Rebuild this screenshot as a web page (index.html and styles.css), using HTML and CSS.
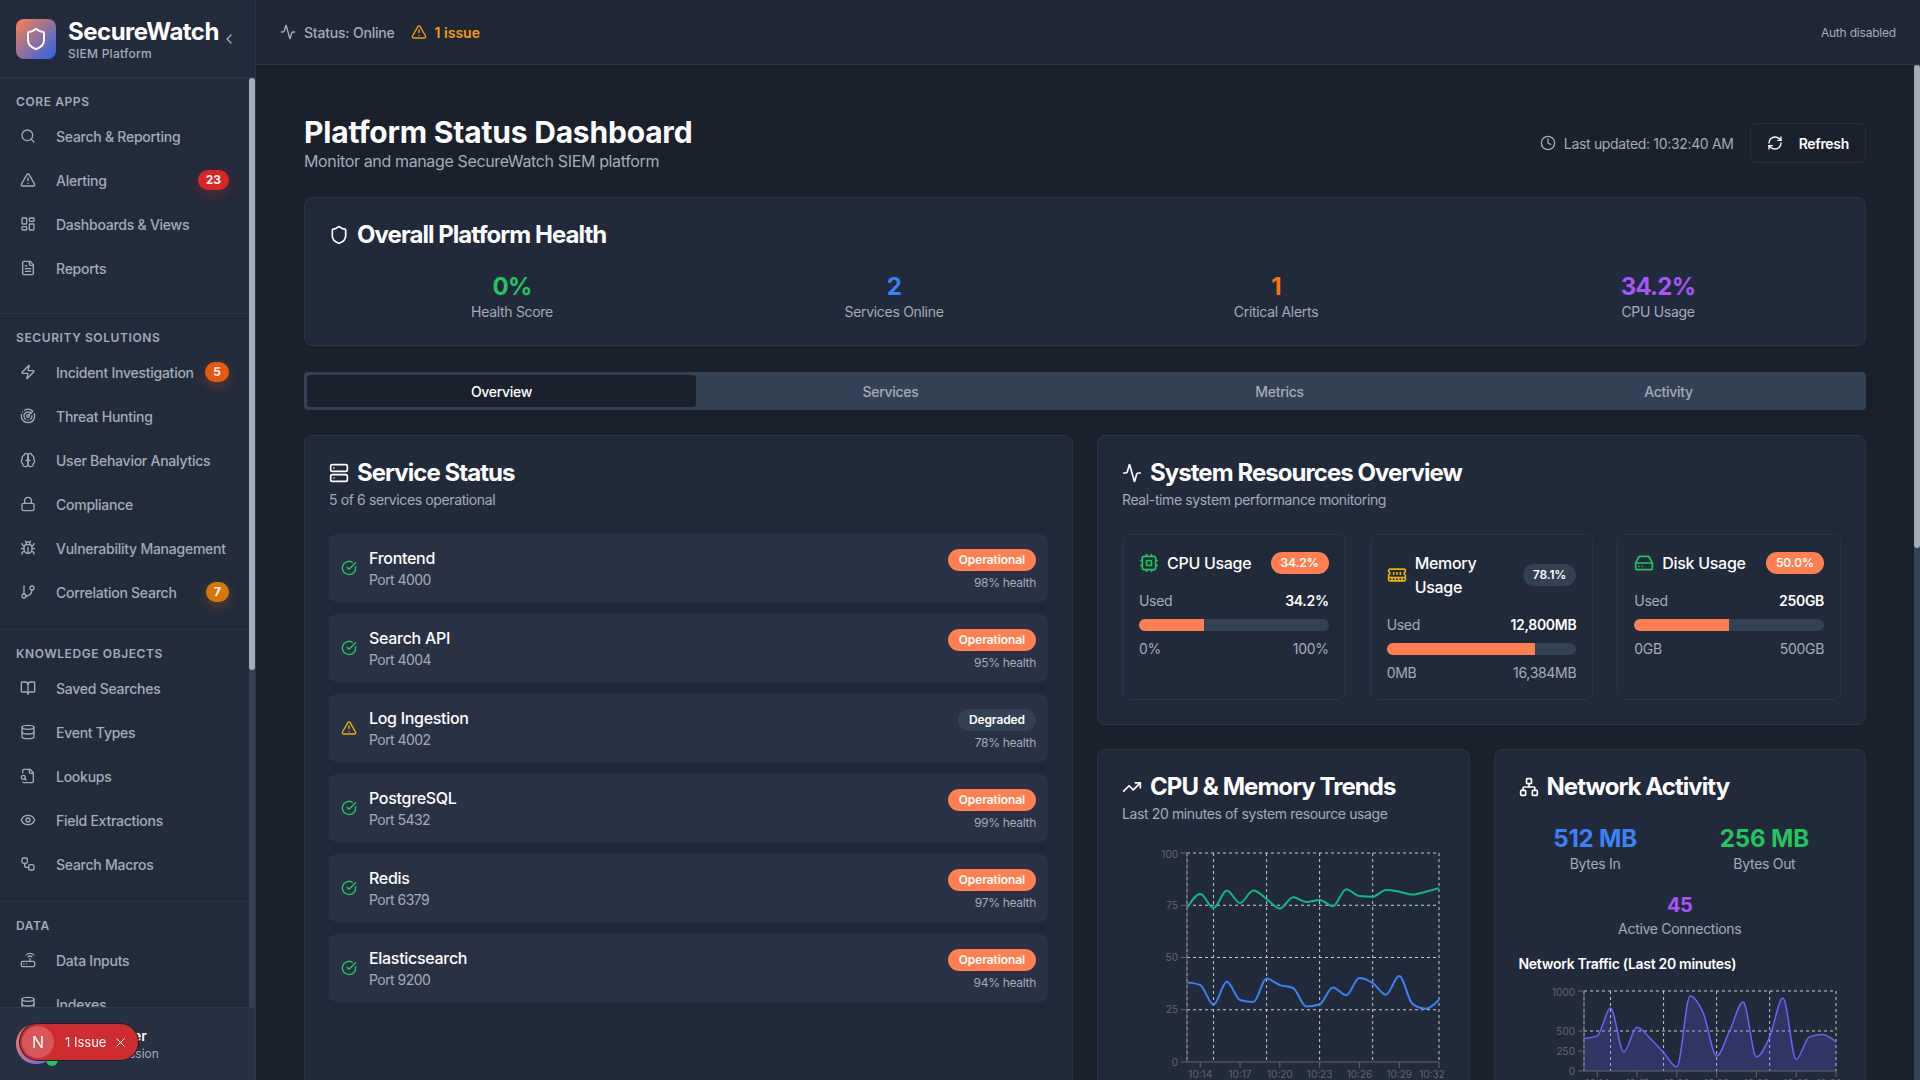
FILE: index.html
```html
<!DOCTYPE html>
<html lang="en">
<head>
    <meta charset="UTF-8">
    <meta name="viewport" content="width=device-width, initial-scale=1.0">
    <title>SecureWatch - Platform Status</title>
    <link rel="stylesheet" href="styles.css">
</head>
<body>
    <!-- Icon sprite -->
    <svg class="sprite" xmlns="http://www.w3.org/2000/svg">
        <symbol id="i-search" viewBox="0 0 24 24"><circle cx="11" cy="11" r="8"/><path d="m21 21-4.3-4.3"/></symbol>
        <symbol id="i-alert" viewBox="0 0 24 24"><path d="m21.73 18-8-14a2 2 0 0 0-3.48 0l-8 14A2 2 0 0 0 4 21h16a2 2 0 0 0 1.73-3"/><path d="M12 9v4"/><path d="M12 17h.01"/></symbol>
        <symbol id="i-dashboard" viewBox="0 0 24 24"><rect x="3" y="3" width="7" height="9" rx="1"/><rect x="14" y="3" width="7" height="5" rx="1"/><rect x="14" y="12" width="7" height="9" rx="1"/><rect x="3" y="16" width="7" height="5" rx="1"/></symbol>
        <symbol id="i-file" viewBox="0 0 24 24"><path d="M15 2H6a2 2 0 0 0-2 2v16a2 2 0 0 0 2 2h12a2 2 0 0 0 2-2V7Z"/><path d="M14 2v4a2 2 0 0 0 2 2h4"/><path d="M10 9H8"/><path d="M16 13H8"/><path d="M16 17H8"/></symbol>
        <symbol id="i-zap" viewBox="0 0 24 24"><path d="M4 14a1 1 0 0 1-.78-1.63l9.9-10.2a.5.5 0 0 1 .86.46l-1.92 6.02A1 1 0 0 0 13 10h7a1 1 0 0 1 .78 1.63l-9.9 10.2a.5.5 0 0 1-.86-.46l1.92-6.02A1 1 0 0 0 11 14z"/></symbol>
        <symbol id="i-radar" viewBox="0 0 24 24"><path d="M19.07 4.93A10 10 0 0 0 6.99 3.34"/><path d="M4 6h.01"/><path d="M2.29 9.62A10 10 0 1 0 21.31 8.35"/><path d="M16.24 7.76A6 6 0 1 0 8.23 16.67"/><path d="M12 18h.01"/><path d="M17.99 11.66A6 6 0 0 1 15.77 16.67"/><circle cx="12" cy="12" r="2"/><path d="m13.41 10.59 5.66-5.66"/></symbol>
        <symbol id="i-brain" viewBox="0 0 24 24"><path d="M12 5a3 3 0 1 0-5.997.125 4 4 0 0 0-2.526 5.77 4 4 0 0 0 .556 6.588A4 4 0 1 0 12 18Z"/><path d="M12 5a3 3 0 1 1 5.997.125 4 4 0 0 1 2.526 5.77 4 4 0 0 1-.556 6.588A4 4 0 1 1 12 18Z"/><path d="M15 13a4.5 4.5 0 0 1-3-4 4.5 4.5 0 0 1-3 4"/></symbol>
        <symbol id="i-lock" viewBox="0 0 24 24"><rect x="3" y="11" width="18" height="11" rx="2"/><path d="M7 11V7a5 5 0 0 1 10 0v4"/></symbol>
        <symbol id="i-bug" viewBox="0 0 24 24"><path d="m8 2 1.88 1.88"/><path d="M14.12 3.88 16 2"/><path d="M9 7.13v-1a3.003 3.003 0 1 1 6 0v1"/><path d="M12 20c-3.3 0-6-2.7-6-6v-3a4 4 0 0 1 4-4h4a4 4 0 0 1 4 4v3c0 3.3-2.7 6-6 6"/><path d="M12 20v-9"/><path d="M6.53 9C4.6 8.8 3 7.1 3 5"/><path d="M6 13H2"/><path d="M3 21c0-2.1 1.7-3.9 3.8-4"/><path d="M20.97 5c0 2.1-1.6 3.8-3.5 4"/><path d="M22 13h-4"/><path d="M17.2 17c2.1.1 3.8 1.9 3.8 4"/></symbol>
        <symbol id="i-branch" viewBox="0 0 24 24"><path d="M6 3v12"/><circle cx="18" cy="6" r="3"/><circle cx="6" cy="18" r="3"/><path d="M18 9a9 9 0 0 1-9 9"/></symbol>
        <symbol id="i-book" viewBox="0 0 24 24"><path d="M12 7v14"/><path d="M3 18a1 1 0 0 1-1-1V4a1 1 0 0 1 1-1h5a4 4 0 0 1 4 4 4 4 0 0 1 4-4h5a1 1 0 0 1 1 1v13a1 1 0 0 1-1 1h-6a3 3 0 0 0-3 3 3 3 0 0 0-3-3z"/></symbol>
        <symbol id="i-database" viewBox="0 0 24 24"><ellipse cx="12" cy="5" rx="9" ry="3"/><path d="M3 5V19A9 3 0 0 0 21 19V5"/><path d="M3 12A9 3 0 0 0 21 12"/></symbol>
        <symbol id="i-file-search" viewBox="0 0 24 24"><path d="M14 2v4a2 2 0 0 0 2 2h4"/><path d="M4.268 21a2 2 0 0 0 1.727 1H18a2 2 0 0 0 2-2V7l-5-5H6a2 2 0 0 0-2 2v3"/><path d="m9 18-1.5-1.5"/><circle cx="5" cy="14" r="3"/></symbol>
        <symbol id="i-eye" viewBox="0 0 24 24"><path d="M2.062 12.348a1 1 0 0 1 0-.696 10.75 10.75 0 0 1 19.876 0 1 1 0 0 1 0 .696 10.75 10.75 0 0 1-19.876 0"/><circle cx="12" cy="12" r="3"/></symbol>
        <symbol id="i-workflow" viewBox="0 0 24 24"><rect x="3" y="3" width="8" height="8" rx="2"/><path d="M7 11v4a2 2 0 0 0 2 2h4"/><rect x="13" y="13" width="8" height="8" rx="2"/></symbol>
        <symbol id="i-router" viewBox="0 0 24 24"><rect x="2" y="14" width="20" height="8" rx="2"/><path d="M6.01 18H6"/><path d="M10.01 18H10"/><path d="M15 10v4"/><path d="M17.84 7.17a4 4 0 0 0-5.66 0"/><path d="M20.66 4.34a8 8 0 0 0-11.31 0"/></symbol>
        <symbol id="i-activity" viewBox="0 0 24 24"><path d="M22 12h-2.48a2 2 0 0 0-1.93 1.46l-2.35 8.36a.25.25 0 0 1-.48 0L9.24 2.18a.25.25 0 0 0-.48 0l-2.35 8.36A2 2 0 0 1 4.49 12H2"/></symbol>
        <symbol id="i-shield" viewBox="0 0 24 24"><path d="M20 13c0 5-3.5 7.5-7.66 8.95a1 1 0 0 1-.67-.01C7.5 20.5 4 18 4 13V6a1 1 0 0 1 1-1c2 0 4.5-1.2 6.24-2.72a1.17 1.17 0 0 1 1.52 0C14.51 3.81 17 5 19 5a1 1 0 0 1 1 1z"/></symbol>
        <symbol id="i-clock" viewBox="0 0 24 24"><circle cx="12" cy="12" r="10"/><path d="M12 6v6l4 2"/></symbol>
        <symbol id="i-refresh" viewBox="0 0 24 24"><path d="M3 12a9 9 0 0 1 9-9 9.75 9.75 0 0 1 6.74 2.74L21 8"/><path d="M21 3v5h-5"/><path d="M21 12a9 9 0 0 1-9 9 9.75 9.75 0 0 1-6.74-2.74L3 16"/><path d="M8 16H3v5"/></symbol>
        <symbol id="i-server" viewBox="0 0 24 24"><rect x="2" y="2" width="20" height="8" rx="2"/><rect x="2" y="14" width="20" height="8" rx="2"/><path d="M6 6h.01"/><path d="M6 18h.01"/></symbol>
        <symbol id="i-cpu" viewBox="0 0 24 24"><rect x="4" y="4" width="16" height="16" rx="2"/><rect x="9" y="9" width="6" height="6" rx="1"/><path d="M15 2v2"/><path d="M15 20v2"/><path d="M2 15h2"/><path d="M2 9h2"/><path d="M20 15h2"/><path d="M20 9h2"/><path d="M9 2v2"/><path d="M9 20v2"/></symbol>
        <symbol id="i-memory" viewBox="0 0 24 24"><path d="M6 19v-3"/><path d="M10 19v-3"/><path d="M14 19v-3"/><path d="M18 19v-3"/><path d="M8 11V9"/><path d="M16 11V9"/><path d="M12 11V9"/><path d="M2 15h20"/><path d="M2 7a2 2 0 0 1 2-2h16a2 2 0 0 1 2 2v1.1a2 2 0 0 0 0 3.837V17a2 2 0 0 1-2 2H4a2 2 0 0 1-2-2v-5.1a2 2 0 0 0 0-3.837Z"/></symbol>
        <symbol id="i-disk" viewBox="0 0 24 24"><path d="M22 12H2"/><path d="M5.45 5.11 2 12v6a2 2 0 0 0 2 2h16a2 2 0 0 0 2-2v-6l-3.45-6.89A2 2 0 0 0 16.76 4H7.24a2 2 0 0 0-1.79 1.11z"/><path d="M6 16h.01"/><path d="M10 16h.01"/></symbol>
        <symbol id="i-trend" viewBox="0 0 24 24"><path d="M16 7h6v6"/><path d="m22 7-8.5 8.5-5-5L2 17"/></symbol>
        <symbol id="i-network" viewBox="0 0 24 24"><rect x="16" y="16" width="6" height="6" rx="1"/><rect x="2" y="16" width="6" height="6" rx="1"/><rect x="9" y="2" width="6" height="6" rx="1"/><path d="M5 16v-3a1 1 0 0 1 1-1h12a1 1 0 0 1 1 1v3"/><path d="M12 12V8"/></symbol>
        <symbol id="i-check" viewBox="0 0 24 24"><path d="M21.801 10A10 10 0 1 1 17 3.335"/><path d="m9 11 3 3L22 4"/></symbol>
        <symbol id="i-chevron" viewBox="0 0 24 24"><path d="m15 18-6-6 6-6"/></symbol>
        <symbol id="i-x" viewBox="0 0 24 24"><path d="M18 6 6 18"/><path d="m6 6 12 12"/></symbol>
    </svg>

    <div class="app">
        <aside class="sidebar">
            <div class="brand">
                <div class="brand-logo"><svg class="icon icon-logo"><use href="#i-shield"/></svg></div>
                <div class="brand-text">
                    <div class="brand-name">SecureWatch</div>
                    <div class="brand-sub">SIEM Platform</div>
                </div>
                <svg class="icon brand-toggle"><use href="#i-chevron"/></svg>
            </div>

            <nav class="nav">
                <section class="nav-section nav-section-first">
                    <h3 class="nav-title">Core Apps</h3>
                    <a class="nav-item"><svg class="icon"><use href="#i-search"/></svg><span>Search &amp; Reporting</span></a>
                    <a class="nav-item"><svg class="icon"><use href="#i-alert"/></svg><span>Alerting</span><b class="count count-red">23</b></a>
                    <a class="nav-item"><svg class="icon"><use href="#i-dashboard"/></svg><span>Dashboards &amp; Views</span></a>
                    <a class="nav-item"><svg class="icon"><use href="#i-file"/></svg><span>Reports</span></a>
                </section>
                <section class="nav-section">
                    <h3 class="nav-title">Security Solutions</h3>
                    <a class="nav-item"><svg class="icon"><use href="#i-zap"/></svg><span>Incident Investigation</span><b class="count count-orange">5</b></a>
                    <a class="nav-item"><svg class="icon"><use href="#i-radar"/></svg><span>Threat Hunting</span></a>
                    <a class="nav-item"><svg class="icon"><use href="#i-brain"/></svg><span>User Behavior Analytics</span></a>
                    <a class="nav-item"><svg class="icon"><use href="#i-lock"/></svg><span>Compliance</span></a>
                    <a class="nav-item"><svg class="icon"><use href="#i-bug"/></svg><span>Vulnerability Management</span></a>
                    <a class="nav-item"><svg class="icon"><use href="#i-branch"/></svg><span>Correlation Search</span><b class="count count-amber">7</b></a>
                </section>
                <section class="nav-section">
                    <h3 class="nav-title">Knowledge Objects</h3>
                    <a class="nav-item"><svg class="icon"><use href="#i-book"/></svg><span>Saved Searches</span></a>
                    <a class="nav-item"><svg class="icon"><use href="#i-database"/></svg><span>Event Types</span></a>
                    <a class="nav-item"><svg class="icon"><use href="#i-file-search"/></svg><span>Lookups</span></a>
                    <a class="nav-item"><svg class="icon"><use href="#i-eye"/></svg><span>Field Extractions</span></a>
                    <a class="nav-item"><svg class="icon"><use href="#i-workflow"/></svg><span>Search Macros</span></a>
                </section>
                <section class="nav-section">
                    <h3 class="nav-title">Data</h3>
                    <a class="nav-item"><svg class="icon"><use href="#i-router"/></svg><span>Data Inputs</span></a>
                    <a class="nav-item"><svg class="icon"><use href="#i-database"/></svg><span>Indexes</span></a>
                </section>
                <div class="scrollbar"><div class="scrollbar-thumb thumb-nav"></div></div>
            </nav>

            <div class="user">
                <div class="user-avatar"><span class="user-dot"></span></div>
                <div>
                    <div class="user-name">Admin User</div>
                    <div class="user-sub">Current Session</div>
                </div>
            </div>
        </aside>

        <div class="content">
            <header class="topbar">
                <svg class="icon"><use href="#i-activity"/></svg>
                <span class="topbar-status">Status: Online</span>
                <svg class="icon topbar-warn"><use href="#i-alert"/></svg>
                <span class="topbar-issue">1 issue</span>
                <span class="topbar-auth">Auth disabled</span>
            </header>

            <main class="main">
                <div class="main-inner">
                    <div class="page-head">
                        <div>
                            <h1>Platform Status Dashboard</h1>
                            <p class="page-sub">Monitor and manage SecureWatch SIEM platform</p>
                        </div>
                        <div class="page-actions">
                            <svg class="icon"><use href="#i-clock"/></svg>
                            <span class="updated">Last updated: 10:32:40 AM</span>
                            <button class="refresh-btn"><svg class="icon"><use href="#i-refresh"/></svg>Refresh</button>
                        </div>
                    </div>

                    <section class="card health-card">
                        <h2 class="card-title"><svg class="icon icon-title"><use href="#i-shield"/></svg>Overall Platform Health</h2>
                        <div class="health-grid">
                            <div><div class="stat-value text-green">0%</div><div class="stat-label">Health Score</div></div>
                            <div><div class="stat-value text-blue">2</div><div class="stat-label">Services Online</div></div>
                            <div><div class="stat-value text-orange">1</div><div class="stat-label">Critical Alerts</div></div>
                            <div><div class="stat-value text-purple">34.2%</div><div class="stat-label">CPU Usage</div></div>
                        </div>
                    </section>

                    <div class="tabs">
                        <div class="tab tab-active">Overview</div>
                        <div class="tab">Services</div>
                        <div class="tab">Metrics</div>
                        <div class="tab">Activity</div>
                    </div>

                    <div class="overview">
                        <section class="card service-card">
                            <h2 class="card-title"><svg class="icon icon-title"><use href="#i-server"/></svg>Service Status</h2>
                            <p class="card-sub">5 of 6 services operational</p>
                            <div class="service-list">
                                <div class="service">
                                    <svg class="icon text-green"><use href="#i-check"/></svg>
                                    <div class="service-info"><div class="service-name">Frontend</div><div class="service-port">Port 4000</div></div>
                                    <div class="service-state"><span class="pill pill-orange">Operational</span><span class="service-health">98% health</span></div>
                                </div>
                                <div class="service">
                                    <svg class="icon text-green"><use href="#i-check"/></svg>
                                    <div class="service-info"><div class="service-name">Search API</div><div class="service-port">Port 4004</div></div>
                                    <div class="service-state"><span class="pill pill-orange">Operational</span><span class="service-health">95% health</span></div>
                                </div>
                                <div class="service">
                                    <svg class="icon text-amber"><use href="#i-alert"/></svg>
                                    <div class="service-info"><div class="service-name">Log Ingestion</div><div class="service-port">Port 4002</div></div>
                                    <div class="service-state"><span class="pill pill-slate">Degraded</span><span class="service-health">78% health</span></div>
                                </div>
                                <div class="service">
                                    <svg class="icon text-green"><use href="#i-check"/></svg>
                                    <div class="service-info"><div class="service-name">PostgreSQL</div><div class="service-port">Port 5432</div></div>
                                    <div class="service-state"><span class="pill pill-orange">Operational</span><span class="service-health">99% health</span></div>
                                </div>
                                <div class="service">
                                    <svg class="icon text-green"><use href="#i-check"/></svg>
                                    <div class="service-info"><div class="service-name">Redis</div><div class="service-port">Port 6379</div></div>
                                    <div class="service-state"><span class="pill pill-orange">Operational</span><span class="service-health">97% health</span></div>
                                </div>
                                <div class="service">
                                    <svg class="icon text-green"><use href="#i-check"/></svg>
                                    <div class="service-info"><div class="service-name">Elasticsearch</div><div class="service-port">Port 9200</div></div>
                                    <div class="service-state"><span class="pill pill-orange">Operational</span><span class="service-health">94% health</span></div>
                                </div>
                            </div>
                        </section>

                        <div class="overview-right">
                            <section class="card">
                                <h2 class="card-title"><svg class="icon icon-title"><use href="#i-activity"/></svg>System Resources Overview</h2>
                                <p class="card-sub">Real-time system performance monitoring</p>
                                <div class="resource-grid">
                                    <div class="resource">
                                        <div class="resource-head">
                                            <svg class="icon icon-res text-green"><use href="#i-cpu"/></svg>
                                            <span class="resource-name">CPU Usage</span>
                                            <span class="pill pill-orange">34.2%</span>
                                        </div>
                                        <div class="resource-row"><span>Used</span><b>34.2%</b></div>
                                        <div class="bar"><div class="bar-fill" style="width: 34.2%"></div></div>
                                        <div class="resource-row"><span>0%</span><span>100%</span></div>
                                    </div>
                                    <div class="resource">
                                        <div class="resource-head">
                                            <svg class="icon icon-res text-amber"><use href="#i-memory"/></svg>
                                            <span class="resource-name">Memory Usage</span>
                                            <span class="pill pill-slate">78.1%</span>
                                        </div>
                                        <div class="resource-row"><span>Used</span><b>12,800MB</b></div>
                                        <div class="bar"><div class="bar-fill" style="width: 78.1%"></div></div>
                                        <div class="resource-row"><span>0MB</span><span>16,384MB</span></div>
                                    </div>
                                    <div class="resource">
                                        <div class="resource-head">
                                            <svg class="icon icon-res text-green"><use href="#i-disk"/></svg>
                                            <span class="resource-name">Disk Usage</span>
                                            <span class="pill pill-orange">50.0%</span>
                                        </div>
                                        <div class="resource-row"><span>Used</span><b>250GB</b></div>
                                        <div class="bar"><div class="bar-fill" style="width: 50%"></div></div>
                                        <div class="resource-row"><span>0GB</span><span>500GB</span></div>
                                    </div>
                                </div>
                            </section>

                            <div class="chart-cards">
                                <section class="card">
                                    <h2 class="card-title"><svg class="icon icon-title"><use href="#i-trend"/></svg>CPU &amp; Memory Trends</h2>
                                    <p class="card-sub">Last 20 minutes of system resource usage</p>
                                    <svg class="chart chart-trends" id="trendsChart" width="322" height="245"></svg>
                                </section>
                                <section class="card">
                                    <h2 class="card-title"><svg class="icon icon-title"><use href="#i-network"/></svg>Network Activity</h2>
                                    <div class="net-stats">
                                        <div><div class="stat-value text-blue">512 MB</div><div class="stat-label">Bytes In</div></div>
                                        <div><div class="stat-value text-green">256 MB</div><div class="stat-label">Bytes Out</div></div>
                                    </div>
                                    <div class="net-conn">
                                        <div class="net-conn-value text-purple">45</div>
                                        <div class="stat-label">Active Connections</div>
                                    </div>
                                    <h4 class="net-title">Network Traffic (Last 20 minutes)</h4>
                                    <svg class="chart chart-net" id="netChart" width="322" height="110"></svg>
                                </section>
                            </div>
                        </div>
                    </div>
                </div>
                <div class="scrollbar"><div class="scrollbar-thumb thumb-main"></div></div>
            </main>
        </div>
    </div>

    <div class="issue-toast">
        <span class="issue-logo">N</span>
        <span class="issue-text">1 Issue</span>
        <svg class="icon issue-close"><use href="#i-x"/></svg>
    </div>

    <script src="charts.js"></script>
</body>
</html>
```

FILE: styles.css
```css
* {
    margin: 0;
    padding: 0;
    box-sizing: border-box;
}

body {
    background: #1a202c;
    color: #fff;
    font-family: Inter, 'Liberation Sans', sans-serif;
    letter-spacing: -0.3px;
    height: 100vh;
    overflow: hidden;
}

.sprite {
    display: none;
}

.icon {
    width: 16px;
    height: 16px;
    flex-shrink: 0;
    fill: none;
    stroke: currentColor;
    stroke-width: 2;
    stroke-linecap: round;
    stroke-linejoin: round;
}

.text-green { color: #22c55e; }
.text-blue { color: #3b82f6; }
.text-orange { color: #f97316; }
.text-purple { color: #a855f7; }
.text-amber { color: #eab308; }

.app {
    display: flex;
    height: 100vh;
}

/* Sidebar */
.sidebar {
    width: 256px;
    flex-shrink: 0;
    display: flex;
    flex-direction: column;
    background: #222b3c;
    border-right: 1px solid #2c3648;
}

.brand {
    height: 78px;
    flex-shrink: 0;
    display: flex;
    align-items: center;
    padding: 0 18px 0 16px;
    border-bottom: 1px solid #2c3648;
}

.brand-logo {
    width: 40px;
    height: 40px;
    flex-shrink: 0;
    margin-right: 12px;
    border-radius: 8px;
    background: linear-gradient(135deg, #ff7f50, #2563eb);
    display: flex;
    align-items: center;
    justify-content: center;
}

.icon-logo {
    width: 24px;
    height: 24px;
    color: #fff;
}

.brand-text {
    padding-top: 2px;
}

.brand-name {
    font-size: 24px;
    line-height: 28px;
    font-weight: 700;
    letter-spacing: -0.5px;
}

.brand-sub {
    font-size: 12px;
    line-height: 16px;
    font-weight: 500;
    letter-spacing: 0.25px;
    color: #a3acb9;
}

.brand-toggle {
    margin-left: auto;
    color: #a3acb9;
}

.nav {
    position: relative;
    flex: 1;
    min-height: 0;
    padding-right: 6px;
    overflow: hidden;
}

/* Scrollbars are drawn so they show in every browser setup */
.scrollbar {
    position: absolute;
    top: 0;
    right: 0;
    bottom: 0;
    width: 6px;
    background: #334155;
}

.scrollbar-thumb {
    background: #a3adba;
    border-radius: 3px;
}

.thumb-nav { height: 592px; }
.thumb-main { height: 483px; }

.nav-section {
    padding: 16px 8px 15px;
    border-bottom: 1px solid #2a3446;
}

.nav-section-first {
    padding-bottom: 23px;
}

.nav-section:last-of-type {
    border-bottom: none;
}

.nav-title {
    padding: 0 8px;
    margin-bottom: 5px;
    font-size: 12px;
    line-height: 15px;
    font-weight: 600;
    letter-spacing: 0.6px;
    text-transform: uppercase;
    color: #a3acb9;
}

.nav-item {
    height: 44px;
    display: flex;
    align-items: center;
    padding: 0 12px;
    font-size: 14px;
    font-weight: 500;
    letter-spacing: -0.25px;
    white-space: nowrap;
    color: #a3acb9;
}

.nav-item .icon {
    margin-right: 20px;
}

.count {
    margin-left: auto;
    min-width: 22px;
    height: 20px;
    padding: 0 8px;
    border-radius: 10px;
    font-size: 12px;
    line-height: 20px;
    font-weight: 700;
    letter-spacing: 0;
    text-align: center;
    color: #fff;
}

.count-red {
    background: #dc2626;
    box-shadow: 0 4px 12px rgba(220, 38, 38, 0.3);
}

.count-orange {
    background: #ea580c;
    box-shadow: 0 4px 12px rgba(234, 88, 12, 0.3);
}

.count-amber {
    background: #d97706;
    box-shadow: 0 4px 12px rgba(217, 119, 6, 0.3);
}

.user {
    height: 73px;
    flex-shrink: 0;
    display: flex;
    align-items: center;
    gap: 12px;
    padding: 0 16px;
    background: #283143;
    border-top: 1px solid #2f394c;
}

.user-avatar {
    position: relative;
    width: 40px;
    height: 40px;
    flex-shrink: 0;
    border-radius: 50%;
    background: linear-gradient(135deg, #ff7f50, #6366f1);
}

.user-dot {
    position: absolute;
    right: -2px;
    bottom: -2px;
    width: 12px;
    height: 12px;
    border-radius: 50%;
    background: #22c55e;
}

.user-name {
    font-size: 14px;
    line-height: 20px;
    font-weight: 600;
    letter-spacing: 0;
}

.user-sub {
    font-size: 12px;
    line-height: 16px;
    letter-spacing: 0;
    color: #a3acb9;
}

/* Next dev badge */
.issue-toast {
    position: fixed;
    left: 20px;
    bottom: 20px;
    height: 36px;
    width: 118px;
    display: flex;
    align-items: center;
    padding-left: 2px;
    border-radius: 18px;
    background: #cf2c30;
    box-shadow: 0 0 0 1px #1a202c;
    font-size: 13px;
    font-weight: 400;
    letter-spacing: 0;
}

.issue-logo {
    width: 32px;
    height: 32px;
    flex-shrink: 0;
    border-radius: 50%;
    background: rgba(255, 255, 255, 0.2);
    display: flex;
    align-items: center;
    justify-content: center;
    font-size: 16px;
}

.issue-text {
    margin-left: 11px;
}

.issue-close {
    width: 15px;
    height: 15px;
    margin-left: 7px;
    stroke-width: 1.6;
}

/* Top bar */
.content {
    flex: 1;
    min-width: 0;
    display: flex;
    flex-direction: column;
}

.topbar {
    height: 65px;
    flex-shrink: 0;
    display: flex;
    align-items: center;
    padding: 0 24px;
    background: #1f2737;
    border-bottom: 1px solid #2c3648;
    font-size: 14px;
    color: #a3acb9;
}

.topbar-status {
    margin-left: 8px;
    font-weight: 500;
    letter-spacing: -0.2px;
}

.topbar-warn {
    margin-left: 16px;
    color: #f59e0b;
}

.topbar-issue {
    margin-left: 8px;
    font-weight: 600;
    letter-spacing: 0;
    color: #f59e0b;
}

.topbar-auth {
    margin-left: auto;
    font-size: 12px;
    letter-spacing: -0.2px;
}

/* Main */
.main {
    position: relative;
    flex: 1;
    min-height: 0;
    padding-right: 6px;
    overflow: hidden;
}

.main-inner {
    min-height: 1500px;
    display: flex;
    flex-direction: column;
    padding: 48px;
}

.page-head {
    display: flex;
    align-items: center;
    justify-content: space-between;
    margin-bottom: 24px;
}

h1 {
    padding-top: 2px;
    font-size: 30px;
    line-height: 34px;
    font-weight: 700;
    letter-spacing: -0.2px;
}

.page-sub {
    font-size: 16px;
    line-height: 24px;
    letter-spacing: -0.36px;
    color: #a3acb9;
}

.page-actions {
    display: flex;
    align-items: center;
    color: #a3acb9;
}

.updated {
    margin-left: 8px;
    font-size: 14px;
    letter-spacing: -0.33px;
}

.refresh-btn {
    height: 40px;
    margin-left: 16px;
    padding: 0 16px;
    display: flex;
    align-items: center;
    gap: 16px;
    background: transparent;
    border: 1px solid #262f40;
    border-radius: 6px;
    color: #fff;
    font: 600 14px Inter, 'Liberation Sans', sans-serif;
    letter-spacing: -0.3px;
}

.card {
    background: #212a3b;
    border: 1px solid #2b3547;
    border-radius: 8px;
    padding: 20px 24px 24px;
}

.card-title {
    display: flex;
    align-items: center;
    gap: 8px;
    padding-top: 1px;
    font-size: 24px;
    line-height: 32px;
    font-weight: 700;
    letter-spacing: -0.95px;
}

.icon-title {
    width: 20px;
    height: 20px;
}

.card-sub {
    margin-top: 1px;
    font-size: 14px;
    line-height: 20px;
    letter-spacing: -0.38px;
    color: #a3acb9;
}

.stat-value {
    font-size: 24px;
    line-height: 31px;
    font-weight: 700;
}

.stat-label {
    font-size: 14px;
    line-height: 20px;
    color: #a3acb9;
}

.health-card {
    padding-bottom: 23px;
}

.health-grid {
    display: grid;
    grid-template-columns: repeat(4, 1fr);
    gap: 16px;
    margin-top: 20px;
    text-align: center;
}

.health-grid .stat-value {
    letter-spacing: -0.8px;
}

.tabs {
    display: grid;
    grid-template-columns: repeat(4, 1fr);
    height: 38px;
    margin: 26px 0 25px;
    padding: 3px;
    background: #334155;
    border-radius: 4px;
}

.tab {
    display: flex;
    align-items: center;
    justify-content: center;
    font-size: 14px;
    font-weight: 500;
    color: #a3acb9;
    border-radius: 3px;
}

.tab-active {
    background: #1a202c;
    color: #fff;
}

.overview {
    flex: 1;
    display: grid;
    grid-template-columns: 1fr 1fr;
    gap: 24px;
}

.service-list {
    display: flex;
    flex-direction: column;
    gap: 12px;
    margin-top: 24px;
}

.service {
    height: 68px;
    display: flex;
    align-items: center;
    gap: 12px;
    padding: 12px;
    background: #293145;
    border-radius: 8px;
}

.service-name {
    font-size: 16px;
    line-height: 24px;
    font-weight: 500;
}

.service-port {
    font-size: 14px;
    line-height: 20px;
    letter-spacing: -0.55px;
    color: #a3acb9;
}

.service-state {
    margin-left: auto;
    align-self: flex-start;
    margin-top: 3px;
    display: flex;
    flex-direction: column;
    align-items: flex-end;
    gap: 4px;
}

.service-health {
    font-size: 12px;
    line-height: 16px;
    color: #a3acb9;
}

.pill {
    height: 22px;
    padding: 0 11px;
    border-radius: 11px;
    font-size: 12px;
    line-height: 22px;
    font-weight: 600;
    letter-spacing: -0.1px;
    color: #fff;
    white-space: nowrap;
}

.pill-orange { background: #ff7f50; }
.pill-slate { background: #334155; }

.overview-right {
    display: flex;
    flex-direction: column;
    gap: 24px;
}

.resource-grid {
    display: grid;
    grid-template-columns: repeat(3, 1fr);
    gap: 24px;
    margin-top: 24px;
}

.resource {
    padding: 16px;
    border: 1px solid #2b3547;
    border-radius: 8px;
}

.resource-head {
    display: flex;
    align-items: center;
    gap: 8px;
    margin-bottom: 16px;
}

.resource-head .pill {
    padding: 0 10px;
}

.icon-res {
    width: 20px;
    height: 20px;
}

.resource-name {
    flex: 1;
    font-size: 16px;
    line-height: 24px;
    font-weight: 500;
}

.resource-row {
    display: flex;
    justify-content: space-between;
    font-size: 14px;
    line-height: 20px;
    color: #a3acb9;
}

.resource-row b {
    font-weight: 600;
    color: #fff;
}

.bar {
    height: 12px;
    margin: 8px 0;
    border-radius: 6px;
    background: #334155;
    overflow: hidden;
}

.bar-fill {
    height: 100%;
    background: #ff7f50;
}

.chart-cards {
    display: grid;
    grid-template-columns: 1fr 1fr;
    gap: 24px;
}

.chart {
    display: block;
}

.chart-trends {
    margin-top: 11px;
}

.chart text {
    font-size: 10px;
    letter-spacing: 0;
    fill: #666;
    stroke: none;
}

.net-stats {
    display: grid;
    grid-template-columns: 1fr 1fr;
    gap: 16px;
    margin-top: 20px;
    text-align: center;
}

.net-stats .stat-value {
    letter-spacing: -0.15px;
}

.net-conn {
    margin-top: 17px;
    text-align: center;
}

.net-conn-value {
    font-size: 20px;
    line-height: 28px;
    font-weight: 700;
}

.net-title {
    margin-top: 15px;
    font-size: 14px;
    line-height: 20px;
    font-weight: 600;
}

.chart-net {
    margin-top: 11px;
}
```

FILE: charts.js
```js
// Data read as value per minute, 20 points
const cpu = [38.1, 36.8, 27.4, 38.4, 29.7, 28.7, 39.9, 36.8, 35.4, 26.5, 27.6, 35.7, 31.9, 40.2, 37.8, 32.2, 41.1, 27.8, 25.5, 29.8];
const memory = [73.7, 80.4, 73.7, 82, 76.1, 82, 78, 73.4, 78.8, 76.6, 77.5, 74.5, 82.6, 79.4, 79.1, 82.3, 81.5, 80.1, 81.5, 83.1];
const traffic = [406, 439, 787, 238, 548, 406, 230, 50, 937, 720, 188, 510, 862, 176, 427, 912, 146, 427, 456, 364];

const labels = ['10:14', '10:17', '10:20', '10:23', '10:26', '10:29', '10:32'];
const labelIdx = [1, 4, 7, 10, 13, 16, 19];
const gridIdx = [0, 2, 6, 10, 14, 19];
const NS = 'http://www.w3.org/2000/svg';

function add(svg, name, attrs, text) {
    const el = document.createElementNS(NS, name);
    Object.keys(attrs).forEach((k) => el.setAttribute(k, attrs[k]));
    if (text) el.textContent = text;
    svg.appendChild(el);
}

// Same curve as d3 curveMonotoneX
function monotone(pts) {
    const n = pts.length;
    const sl = [];
    for (let i = 0; i < n - 1; i++) {
        sl.push((pts[i + 1][1] - pts[i][1]) / (pts[i + 1][0] - pts[i][0]));
    }
    const t = new Array(n);
    for (let i = 1; i < n - 1; i++) {
        const a = sl[i - 1];
        const b = sl[i];
        t[i] = a * b <= 0 ? 0 : Math.sign(a) * Math.min(Math.abs(a), Math.abs(b), Math.abs(a + b) / 4) * 2;
    }
    t[0] = (3 * sl[0] - t[1]) / 2;
    t[n - 1] = (3 * sl[n - 2] - t[n - 2]) / 2;
    let d = `M${pts[0][0]},${pts[0][1]}`;
    for (let i = 0; i < n - 1; i++) {
        const h = (pts[i + 1][0] - pts[i][0]) / 3;
        d += `C${pts[i][0] + h},${pts[i][1] + h * t[i]} ${pts[i + 1][0] - h},${pts[i + 1][1] - h * t[i + 1]} ${pts[i + 1][0]},${pts[i + 1][1]}`;
    }
    return d;
}

function drawChart(id, o) {
    const svg = document.getElementById(id);
    const left = 65;
    const right = 317;
    const step = (right - left) / 19;
    const px = (i) => left + i * step;
    const py = (v) => o.bottom - (v / o.max) * (o.bottom - o.top);

    // grid
    o.grid.forEach((v) => add(svg, 'line', { x1: left, x2: right, y1: py(v), y2: py(v), stroke: '#ccc', 'stroke-dasharray': '3 3' }));
    gridIdx.forEach((i) => add(svg, 'line', { x1: px(i), x2: px(i), y1: o.top, y2: o.bottom, stroke: '#ccc', 'stroke-dasharray': '3 3' }));

    // series
    o.series.forEach((s) => {
        const d = monotone(s.data.map((v, i) => [px(i), py(v)]));
        if (s.fill) add(svg, 'path', { d: `${d}L${right},${o.bottom}L${left},${o.bottom}Z`, fill: s.fill, stroke: 'none' });
        add(svg, 'path', { d, fill: 'none', stroke: s.color, 'stroke-width': s.width });
    });

    // axes
    add(svg, 'line', { x1: left, x2: left, y1: o.top, y2: o.bottom, stroke: '#666' });
    add(svg, 'line', { x1: left, x2: right, y1: o.bottom, y2: o.bottom, stroke: '#666' });
    o.ticks.forEach((v) => {
        add(svg, 'line', { x1: left - 6, x2: left, y1: py(v), y2: py(v), stroke: '#666' });
        add(svg, 'text', { x: left - 9, y: py(v) + (v === o.max ? 5 : 3.5), 'text-anchor': 'end' }, String(v));
    });
    labelIdx.forEach((i, k) => {
        add(svg, 'line', { x1: px(i), x2: px(i), y1: o.bottom, y2: o.bottom + 6, stroke: '#666' });
        add(svg, 'text', { x: k === 6 ? px(i) - 7 : px(i), y: o.bottom + 15.5, 'text-anchor': 'middle' }, labels[k]);
    });
}

drawChart('trendsChart', {
    top: 18,
    bottom: 227,
    max: 100,
    ticks: [0, 25, 50, 75, 100],
    grid: [25, 50, 75, 100],
    series: [
        { data: memory, color: '#10b981', width: 2 },
        { data: cpu, color: '#3b82f6', width: 2 }
    ]
});

drawChart('netChart', {
    top: 6,
    bottom: 86,
    max: 1000,
    ticks: [0, 250, 500, 1000],
    grid: [500, 1000],
    series: [
        { data: traffic, color: '#6366f1', width: 1.5, fill: 'rgba(99, 102, 241, 0.22)' }
    ]
});
```
